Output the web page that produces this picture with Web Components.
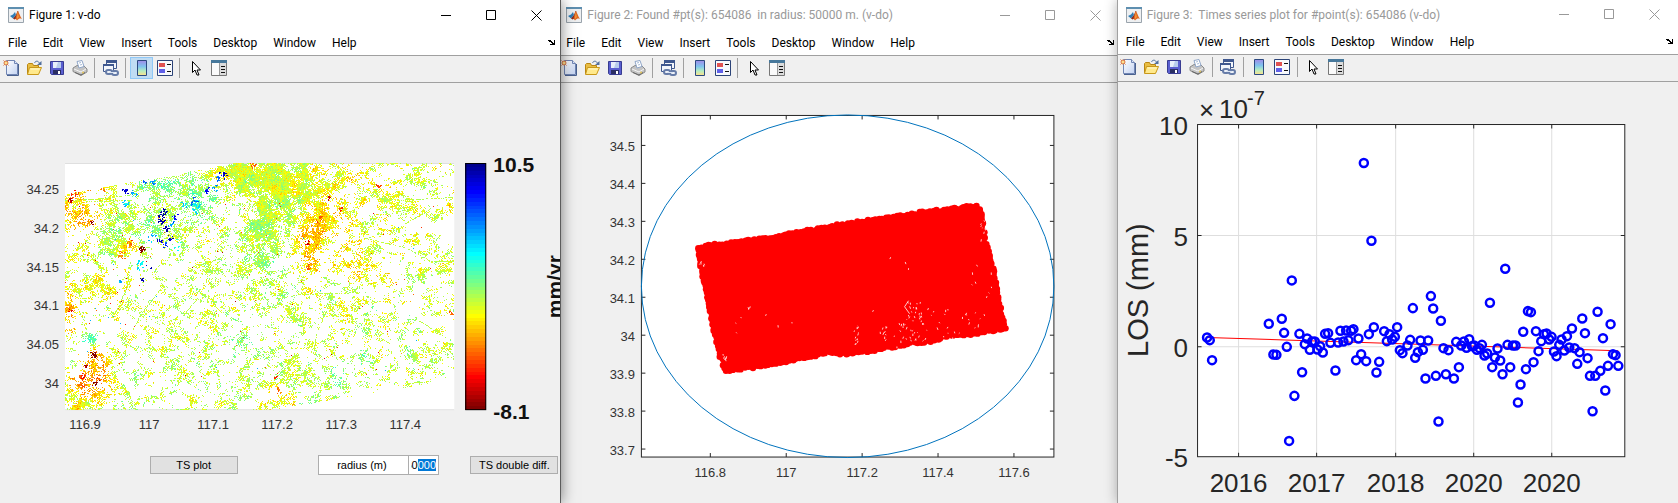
<!DOCTYPE html>
<html lang="en">
<head>
<meta charset="utf-8">
<title>Figures</title>
<style>
  body {
    margin: 0;
    display: flex;
    min-height: 100vh;
    overflow: hidden;
    background: #f0f0f0;
    font-family: "Liberation Sans", sans-serif;
  }
  figure-window { flex: 1 1 0; min-width: 0; }
  #velocity { z-index: 2; }
  #radius { margin: 0 -2px 0 -3px; }
  #series { z-index: 1; }
</style>
</head>
<body>
<figure-window id="velocity" active>
  <span slot="title">Figure 1: v-do</span>
  <velocity-map></velocity-map>
  <velocity-controls></velocity-controls>
</figure-window>
<figure-window id="radius">
  <span slot="title">Figure 2: Found #pt(s): 654086  in radius: 50000 m. (v-do)</span>
  <radius-plot></radius-plot>
</figure-window>
<figure-window id="series" raised>
  <span slot="title">Figure 3:  Times series plot for #point(s): 654086 (v-do)</span>
  <series-plot></series-plot>
</figure-window>

<template id="window-template">
  <style>
    :host {
      display: flex;
      flex-direction: column;
      box-sizing: border-box;
      position: relative;
      background: #f0f0f0;
      color: #000;
      --title-height: 30px;
    }
    :host([active]) { border-right: 1px solid #5c5c5c; box-shadow: 0 0 14px rgba(0, 0, 0, .5); }
    :host([raised]) { border-left: 1px solid #a0a0a0; box-shadow: 0 0 12px rgba(0, 0, 0, .3); --title-height: 29px; }
    header, nav { font: 12px/16px Roboto, "Open Sans", sans-serif; background: #fff; display: flex; align-items: center; }
    header { height: var(--title-height); padding-left: 8px; color: #999; }
    :host([active]) header { color: #000; }
    .title { flex: 1; margin-left: 5px; white-space: pre; overflow: hidden; }
    button { border: 0; background: none; padding: 0; margin: 0; font: inherit; color: inherit; }
    header button { width: 45px; height: 28px; }
    header svg, nav svg { display: block; margin: auto; }
    header button:last-child { margin-right: 1px; }
    nav { height: 25px; }
    nav button { padding: 0 8px; }
    nav button:last-child { margin-left: auto; padding: 0 4px; }
    .body { flex: 1; overflow: hidden; }
  </style>
  <header>
    <svg width="16" height="16" viewBox="0 0 16 16">
      <path d="M.5 .5h15v15H.5z" fill="#eef0f2" stroke="#9aa4ad"/>
      <path d="M0 0h16v2H0z" fill="#5e8fb0"/>
      <path d="M2 9l3-1.500 2-2.500 1 3-3 3.500z" fill="#2f7db5"/>
      <path d="M5 11.500l3-3.500 1.500-4 1 .5-2 7-2 1z" fill="#8a2a1c"/>
      <path d="M9.500 4c1.500 1 2.500 5 4.500 8-2-1-3-.5-5 1.500l-1.500-2z" fill="#e0661f"/>
      <path d="M9.800 5l.8 5-1.400 2z" fill="#f8b34c"/>
    </svg>
    <span class="title"><slot name="title"></slot></span>
    <button aria-label="Minimize"><svg width="11" height="11" fill="none" stroke="currentColor"><path d="M0 5.500h10"/></svg></button>
    <button aria-label="Maximize"><svg width="11" height="11" fill="none" stroke="currentColor"><path d="M.5 .5h9v9h-9z"/></svg></button>
    <button aria-label="Close"><svg width="11" height="11" fill="none" stroke="currentColor"><path d="M.5 .5l10 10M10.500 .5l-10 10"/></svg></button>
  </header>
  <nav>
    <button>File</button><button>Edit</button><button>View</button><button>Insert</button><button>Tools</button><button>Desktop</button><button>Window</button><button>Help</button>
    <button aria-label="Dock"><svg width="8" height="7"><path d="M0 1h3v1h1v1h1v1h1V1h1v5H2V5h2V4H3V3H1V2H0z"/></svg></button>
  </nav>
  <figure-toolbar></figure-toolbar>
  <div class="body"><slot></slot></div>
</template>

<template id="toolbar-template">
  <style>
    :host {
      display: flex;
      align-items: center;
      height: 24px;
      padding-bottom: 2px;
      border-top: 1px solid #a0a0a0;
      border-bottom: 1px solid #a0a0a0;
      background: #f0f0f0;
    }
    button { box-sizing: border-box; width: 23px; height: 22px; padding: 0; border: 1px solid transparent; background: none; }
    button:first-of-type { margin-left: -1px; }
    button.on { border-color: #90c8f6; background: #c0dcf3; }
    svg { display: block; margin: auto; }
    i { width: 1px; height: 20px; margin: 0 4px 0 3px; background: #a0a0a0; }
  </style>
  <button aria-label="New"><svg width="16" height="16">
    <defs><linearGradient id="p" x2="1" y2="1"><stop stop-color="#fff"/><stop offset="1" stop-color="#c3d3f2"/></linearGradient></defs>
    <path d="M4 15.500H15.500V4" fill="none" stroke="#49618f"/>
    <path d="M3.500 .5h8l3 3V14.500h-11z" fill="url(#p)" stroke="#7186b4"/>
    <path d="M11.500 .5v3h3" fill="#dce6fa" stroke="#7186b4"/>
    <path d="M.5 .5l5 5M5.500 .5l-5 5" stroke="#d87547"/><circle cx="3" cy="3" r="2" fill="#ffe08d" stroke="#d87547"/>
  </svg></button>
  <button aria-label="Open"><svg width="16" height="16">
    <path d="M1.500 14V4.500l1-1h4l1 2h5V14" fill="#e9bd43" stroke="#b98613"/>
    <path d="M1.500 14.500l2-7h12l-3 7z" fill="#ffe98c" stroke="#c99819"/>
    <path d="M4.500 9h9" stroke="#fff8cf"/>
    <path d="M8.500 3c1-2.500 4-2.500 5 .5" fill="none" stroke="#52709e"/><path d="M15.500 1v4H11z" fill="#52709e"/>
  </svg></button>
  <button aria-label="Save"><svg width="16" height="16">
    <path d="M1.500 1.500h13v13h-12l-1-1z" fill="#5a5fd0" stroke="#383c91"/>
    <path d="M4 2h8v6H4z" fill="#e7effb"/><path d="M9 2h3v6H7z" fill="#b8cdec"/>
    <path d="M4 10h8v4H4z" fill="#2a2e63"/><path d="M9 11h2v3H9z" fill="#fff"/>
  </svg></button>
  <button aria-label="Print"><svg width="16" height="16">
    <path d="M1 8l4-2.500 7 .5 3 3v3l-6 3.500-8-4z" fill="#c4c4c4" stroke="#8a8a8a"/>
    <path d="M5 1.500l5-1 2 6-5 1.500z" fill="#fff" stroke="#8fa6c8"/><path d="M7 3l2-.5M8 5l2-.5" stroke="#a8bcd8"/>
    <path d="M2 9l7 3 5-3" stroke="#f4f4f4" fill="none"/><path d="M3 12.500l6 2.500 4-2.500" stroke="#666" fill="none"/>
    <circle cx="11" cy="12.500" r="1" fill="#e6c65a"/>
  </svg></button>
  <i></i>
  <button aria-label="Link"><svg width="16" height="16">
    <path d="M3.500 .5h10v8h-10z" fill="#f3f6fb" stroke="#3f588f"/><path d="M3 0h11v3H3z" fill="#3f588f"/>
    <path d="M.5 4.500h10v7H.5z" fill="#f3f6fb" stroke="#3f588f"/><path d="M0 4h11v2H0z" fill="#3f588f"/>
    <g fill="none" stroke="#667ca8" stroke-width="2"><rect x="3" y="10" width="6" height="4" rx="2" fill="#eef2f8"/><rect x="9" y="11" width="6" height="4" rx="2" fill="#eef2f8"/></g>
    <path d="M6 12.500h6" stroke="#dbe5f5"/>
  </svg></button>
  <i></i>
  <button id="colorbar" aria-label="Colorbar"><svg width="12" height="16">
    <defs><linearGradient id="c" x2="0" y2="1"><stop stop-color="#a08be8"/><stop offset=".4" stop-color="#7fc4ee"/><stop offset=".7" stop-color="#b5edc0"/><stop offset="1" stop-color="#ffe08a"/></linearGradient></defs>
    <path d="M1.500 .5h9v15h-9z" fill="url(#c)" stroke="#2c4a80"/>
  </svg></button>
  <button aria-label="Legend"><svg width="16" height="16">
    <path d="M.5 .5h15v15H.5z" fill="#f7f9fd" stroke="#2c4478"/>
    <path d="M2 3h6v4H2z" fill="#e05252"/><path d="M2 9h6v4H2z" fill="#6060e8"/>
    <path d="M10 4.500h4M10 11.500h4" stroke="#111"/>
  </svg></button>
  <i></i>
  <button aria-label="Edit plot"><svg width="10" height="16">
    <path d="M1.500 1.500v11l2.500-2.500 2 5h2l-2-5h3.500z" fill="#fff" stroke="#000"/>
  </svg></button>
  <button aria-label="Property inspector"><svg width="16" height="16">
    <path d="M.5 .5h15v15H.5z" fill="#fafafa" stroke="#777"/><path d="M0 0h16v3H0z" fill="#47789b"/>
    <path d="M8 3h7v12H8z" fill="#dcdcdc"/><path d="M8.500 3v12" stroke="#999"/>
    <path d="M10 6.500h4M10 9.500h4M10 12.500h4" stroke="#111"/>
  </svg></button>
</template>

<template id="controls-template">
  <style>
    :host {
      display: grid;
      grid-template-columns: 150fr 88px 81fr 91px 30px 31fr 88px 2px;
      align-items: center;
      height: 20px;
      margin-top: 9px;
      font-size: 11px;
    }
    button, label, input { box-sizing: border-box; border: 1px solid #adadad; font: inherit; color: #000; padding: 0; text-align: center; }
    button { height: 18px; background: #e1e1e1; grid-column: 2; }
    button:last-child { grid-column: 7; }
    label { height: 20px; line-height: 18px; background: #fff; padding-right: 4px; grid-column: 4; }
    input { height: 20px; width: 31px; background: #fff; outline: none; padding: 0 2px; border-radius: 0; margin-left: -1px; text-align: left; }
    input::selection { background: #0078d7; color: #fff; }
  </style>
  <button>TS plot</button>
  <label for="r">radius (m)</label>
  <input id="r" value="50000">
  <button>TS double diff.</button>
</template>

<script>
const PLOT_STYLE = `<style>
  :host { display: block; }
  svg { display: block; width: 100%; height: auto; overflow: visible; }
  text { font-family: "Liberation Sans", sans-serif; font-size: 13px; fill: #333; }
  .end { text-anchor: end; }
  .mid { text-anchor: middle; }
</style>`;

// Small seeded generator, so the scatter is the same on every load
function seeded(seed) {
  return () => {
    seed = (seed * 1664525 + 1013904223) >>> 0;
    return seed / 4294967296;
  };
}

function valueNoise(rand) {
  const table = Array.from({ length: 4096 }, rand);
  const at = (x, y) => table[((x * 374761 ^ y * 668265) >>> 3) & 4095];
  return (x, y) => {
    const xi = Math.floor(x), yi = Math.floor(y);
    const u = x - xi, v = y - yi;
    const a = at(xi, yi) + (at(xi + 1, yi) - at(xi, yi)) * u;
    const b = at(xi, yi + 1) + (at(xi + 1, yi + 1) - at(xi, yi + 1)) * u;
    return a + (b - a) * v;
  };
}

// jet colormap, t = 0 dark blue, t = 1 dark red
function jet(t) {
  const c = k => Math.round(255 * Math.max(0, Math.min(1, 1.5 - Math.abs(4 * t - k))));
  return `rgb(${c(3)},${c(2)},${c(1)})`;
}

function texts(items, cls) {
  return items.map(([x, y, s]) => `<text class="${cls}" x="${x}" y="${y}">${s}</text>`).join("");
}

class FigureWindow extends HTMLElement {
  constructor() {
    super();
    this.attachShadow({ mode: "open" }).append(document.getElementById("window-template").content.cloneNode(true));
  }

  connectedCallback() {
    this.shadowRoot.querySelector("figure-toolbar").toggleAttribute("colorbar", this.hasAttribute("active"));
  }
}

class FigureToolbar extends HTMLElement {
  static observedAttributes = ["colorbar"];

  constructor() {
    super();
    this.attachShadow({ mode: "open" }).append(document.getElementById("toolbar-template").content.cloneNode(true));
  }

  attributeChangedCallback(name, oldValue, newValue) {
    this.shadowRoot.getElementById("colorbar").classList.toggle("on", newValue !== null);
  }
}

// x, y, radius x, radius y, added density, jet value, weight of that value
const PATCHES = [
  [200, 12, 50, 22, .34, .61, .8],
  [182, 12, 14, 12, .25, .52, .8],
  [200, 65, 22, 34, .34, .53, 1],
  [228, 35, 20, 25, .22, .57, .8],
  [190, 100, 18, 22, .18, .54, .7],
  [46, 76, 15, 17, .36, .54, .9],
  [85, 60, 30, 25, .10, .52, .8],
  [105, 20, 30, 8, .14, .48, 1],
  [132, 38, 17, 14, .14, .45, 1],
  [12, 48, 18, 20, .14, .68, 1.4],
  [22, 58, 8, 5, .10, .80, 1],
  [60, 82, 10, 8, .10, .71, 1.2],
  [262, 54, 18, 20, .20, .66, 1.2],
  [245, 84, 9, 24, .20, .70, 1.4],
  [285, 95, 20, 14, .12, .64, 1],
  [300, 30, 30, 18, .08, .63, .7],
  [320, 112, 14, 8, .15, .65, 1],
  [12, 238, 17, 11, .34, .62, 1],
  [28, 194, 10, 10, .16, .76, 2],
  [25, 220, 14, 11, .10, .78, 1.6],
  [25, 178, 9, 6, .10, .42, 1.2],
  [63, 178, 8, 8, .22, .60, 1],
  [32, 124, 20, 10, .14, .61, .6],
  [5, 150, 7, 20, .14, .70, 1],
  [55, 145, 6, 16, .18, .65, 1],
  [178, 175, 10, 16, .10, .50, 1],
  [228, 157, 10, 8, .20, .56, .7],
  [298, 166, 7, 7, .20, .50, .8],
  [297, 196, 8, 6, .34, .47, 1.3],
  [349, 192, 6, 8, .22, .53, .8],
  [273, 218, 9, 10, .22, .46, 1.3],
  [230, 204, 9, 8, .22, .60, .8],
  [213, 238, 12, 12, .12, .65, 1.4],
  [357, 108, 8, 8, .25, .56, .8],
  [350, 19, 7, 6, .20, .56, .8],
  [330, 40, 9, 9, .15, .54, .8]
];

// clumps of strong motion: x, y, radius, jet value, count
const SPOTS = [
  [76, 86, 3, .98, 24], [28, 191, 4, 1, 28], [30, 219, 4, .99, 13], [17, 213, 4, .87, 12],
  [26, 58, 4, .97, 8], [20, 203, 5, .96, 6], [10, 31, 4, .82, 20], [4, 36, 3, .92, 12],
  [38, 26, 3, .75, 12], [95, 57, 5, .04, 20], [98, 48, 4, .05, 18], [101, 67, 4, .03, 18],
  [94, 77, 3, .07, 12], [104, 76, 4, .08, 14], [99, 82, 3, .18, 9], [109, 54, 5, .12, 15],
  [106, 61, 4, .28, 12], [60, 27, 3, .1, 14], [68, 29, 4, .3, 15], [60, 40, 4, .34, 16],
  [78, 18, 2, .23, 7], [87, 18, 3, .26, 9], [74, 101, 4, .36, 22], [77, 116, 3, .05, 7],
  [84, 103, 3, .05, 4], [55, 117, 2, .3, 6], [128, 37, 5, .22, 20], [132, 44, 6, .35, 24],
  [118, 41, 4, .32, 12], [141, 27, 3, .14, 12], [149, 24, 4, .26, 12], [158, 11, 4, .06, 18],
  [154, 16, 4, .24, 10], [86, 73, 5, .32, 12], [112, 82, 5, .4, 8], [242, 80, 3, .9, 12],
  [243, 105, 3, .78, 14], [264, 34, 2, .9, 5], [276, 45, 3, .83, 9], [255, 56, 4, .8, 12],
  [313, 23, 3, .82, 6], [187, 1, 3, .8, 12], [15, 214, 2, .8, 8], [56, 92, 4, .75, 20],
  [64, 79, 4, .76, 16], [210, 214, 2, .85, 6], [213, 227, 3, .75, 10], [386, 150, 3, .78, 8], [5, 147, 2, .9, 5]
];

const ROADS = [
  [[0, 37], [30, 36], [62, 32], [80, 23], [95, 15], [118, 12]],
  [[20, 38], [66, 37]],
  [[68, 166], [75, 152], [95, 126]],
  [[51, 148], [67, 112]],
  [[118, 152], [133, 134]],
  [[267, 132], [251, 172], [248, 190]],
  [[208, 136], [235, 131], [300, 129]],
  [[300, 75], [340, 84], [365, 98], [389, 98]],
  [[330, 37], [389, 34]],
  [[350, 155], [380, 174]],
  [[343, 220], [366, 218]],
  [[233, 41], [270, 17], [280, 50]],
  [[340, 60], [367, 45]],
  [[295, 164], [325, 180]]
];

class VelocityMap extends HTMLElement {
  constructor() {
    super();
    this.attachShadow({ mode: "open" });
  }

  connectedCallback() {
    const yLabels = ["34.25", "34.2", "34.15", "34.1", "34.05", "34"].map((s, i) => [59, 194 + Math.round(i * 38.8), s]);
    const xLabels = ["116.9", "117", "117.1", "117.2", "117.3", "117.4"].map((s, i) => [85 + i * 64, 429, s]);
    let bar = "";
    for (let i = 0; i < 64; i++) {
      bar += `<rect x="465" y="${163 + i * 247 / 64}" width="21" height="${247 / 64}" fill="${jet((i + 1) / 64)}" shape-rendering="crispEdges"/>`;
    }
    this.shadowRoot.innerHTML = `${PLOT_STYLE}
      <style>.bold { font-size: 21px; font-weight: bold; fill: #111; }</style>
      <svg viewBox="0 83 560 363">
        <rect x="65" y="163" width="389" height="247" fill="#fff"/>
        <path d="M65 163.500h389M65 409.500h389" stroke="#dfdfdf"/>
        <g transform="translate(65 163)" fill="none" shape-rendering="crispEdges">${this.pixels(389, 247)}</g>
        ${bar}
        <rect x="465.500" y="163.500" width="20" height="246" fill="none" stroke="#000"/>
        ${texts(yLabels, "end")}${texts(xLabels, "mid")}
        <text class="bold" x="493" y="172">10.5</text>
        <text class="bold" x="493" y="419">-8.1</text>
        <text class="bold" transform="translate(562 318) rotate(-90)">mm/yr</text>
      </svg>`;
  }

  pixels(w, h) {
    const rand = seeded(11);
    const noise = valueNoise(rand);
    const cells = new Float32Array(w * h).fill(-1);
    const set = (x, y, t) => {
      x = Math.round(x);
      y = Math.round(y);
      if (x >= 0 && y >= 0 && x < w && y < h) cells[y * w + x] = Math.max(0, Math.min(1, t));
    };

    for (let y = 0; y < h; y++) {
      for (let x = 0; x < w; x++) {
        if (y < 31 - x * .185 || y > 247 - (x - 205) * .17) continue;
        let d = .29 - .05 * x / w - .05 * y / h;
        let t = .60 - .04 * y / h, weight = 1;
        for (const [px, py, rx, ry, add, value, pull] of PATCHES) {
          const q = ((x - px) / rx) ** 2 + ((y - py) / ry) ** 2;
          if (q > 5) continue;
          const g = Math.exp(-q);
          d += add * g;
          t += value * g * pull * 3;
          weight += g * pull * 3;
        }
        // empty fields around the river and in the west
        d -= .16 * Math.exp(-(((x - 82) / 20) ** 2) - ((y - 105) / 18) ** 2);
        d -= .14 * Math.exp(-(((x - 35) / 30) ** 2) - ((y - 158) / 16) ** 2);
        const n = noise(x / 7, y / 6) * .55 + noise(x / 2.6 + 40, y / 2.2 + 9) * .45;
        if (n + (rand() - .5) * .44 < .94 - d * 1.05) continue;
        const spread = (noise(x / 6 + 90, y / 6 + 31) - .5) * .13 + (rand() + rand() - 1) * .09;
        set(x, y, t / weight + spread);
      }
    }

    for (const line of ROADS) {
      for (let i = 1; i < line.length; i++) {
        const [x0, y0] = line[i - 1], [x1, y1] = line[i];
        const steps = Math.hypot(x1 - x0, y1 - y0);
        for (let k = 0; k < steps; k++) {
          if (rand() < .62) set(x0 + (x1 - x0) * k / steps, y0 + (y1 - y0) * k / steps, .53 + rand() * .06);
        }
      }
    }

    for (const [sx, sy, r, value, count] of SPOTS) {
      for (let i = 0; i < count * .7; i++) {
        const a = rand() * 6.283, q = r * rand();
        const x = sx + Math.cos(a) * q, y = sy + Math.sin(a) * q * 1.2;
        const t = value + (rand() - .5) * .08;
        set(x, y, t);
        if (rand() < .5) set(x + 1, y, t);
        if (rand() < .5) set(x, y + 1, t);
      }
    }

    for (let i = 0; i < 110; i++) {
      const x = rand() * w, y = 35 + rand() * 180;
      set(x, y, rand() < .2 ? .3 : .75 + rand() * .2);
    }

    const paths = Array.from({ length: 41 }, () => "");
    cells.forEach((t, i) => {
      if (t >= 0) paths[Math.round(t * 40)] += `M${i % w} ${Math.floor(i / w) + .5}h1`;
    });
    return paths.map((d, i) => d && `<path d="${d}" stroke="${jet(Math.max(.03, i / 40))}"/>`).join("");
  }
}

class VelocityControls extends HTMLElement {
  constructor() {
    super();
    this.attachShadow({ mode: "open" }).append(document.getElementById("controls-template").content.cloneNode(true));
  }

  connectedCallback() {
    const input = this.shadowRoot.querySelector("input");
    input.focus();
    input.setSelectionRange(2, 5);
    input.scrollLeft = input.scrollWidth;
  }
}

const OUTLINE = [
  [699, 248], [712, 245], [727, 244], [745, 241], [762, 239], [777, 238], [790, 234], [812, 230], [840, 225],
  [862, 222], [890, 218], [920, 213], [948, 210], [968, 207], [978, 207], [982, 214], [983, 226], [985, 241],
  [989, 252], [993, 268], [997, 286], [1000, 304], [1002, 318], [1006, 328], [1000, 330], [978, 333], [965, 336],
  [950, 335], [935, 341], [915, 343], [900, 346], [885, 348], [872, 351], [858, 352], [846, 354], [826, 353],
  [800, 359], [780, 363], [757, 367], [726, 371], [724, 366], [727, 360], [720, 357], [715, 335], [711, 315], [706, 290], [702, 270], [700, 260], [698, 251]
];

// gaps in the coverage: x, y, spread x, spread y, count
const GAPS = [
  [915, 310, 7, 8, 14], [912, 328, 12, 14, 22], [935, 320, 14, 14, 10], [857, 336, 3, 14, 12],
  [886, 334, 3, 8, 8], [972, 322, 14, 12, 10], [985, 285, 14, 14, 7], [950, 330, 26, 10, 12],
  [900, 335, 20, 12, 10], [750, 307, 5, 1, 3], [738, 325, 4, 8, 3], [702, 262, 3, 5, 5],
  [983, 230, 3, 10, 7], [725, 357, 4, 4, 6], [830, 325, 80, 18, 6], [940, 270, 50, 40, 5]
];

class RadiusPlot extends HTMLElement {
  constructor() {
    super();
    this.attachShadow({ mode: "open" });
  }

  connectedCallback() {
    const rand = seeded(5);
    const yTicks = [0, 1, 2, 3, 4, 5, 6, 7, 8].map(i => 145.5 + i * 38);
    const xTicks = [0, 1, 2, 3, 4].map(i => 710.5 + i * 76);
    const yNames = ["34.5", "34.4", "34.3", "34.2", "34.1", "34", "33.9", "33.8", "33.7"];
    const xNames = ["116.8", "117", "117.2", "117.4", "117.6"];
    const ticks = yTicks.map(y => `M641.5 ${y}h4M1054.5 ${y}h-4`).concat(xTicks.map(x => `M${x} 115.5v4M${x} 457.500v-4`)).join("");

    let edge = "";
    OUTLINE.forEach(([x0, y0], i) => {
      const [x1, y1] = OUTLINE[(i + 1) % OUTLINE.length];
      const n = Math.ceil(Math.hypot(x1 - x0, y1 - y0) / 4);
      for (let k = 0; k < n; k++) {
        edge += `<circle cx="${x0 + (x1 - x0) * k / n + rand() * 2 - 1}" cy="${y0 + (y1 - y0) * k / n + rand() * 2 - 1}" r="3.200"/>`;
      }
    });

    let gaps = "";
    for (const [x, y, sx, sy, count] of GAPS) {
      for (let i = 0; i < count; i++) {
        gaps += `M${x + (rand() * 2 - 1) * sx} ${y + (rand() * 2 - 1) * sy}l${rand() * 2 - 1} ${rand() * 2 + .5}`;
      }
    }

    this.shadowRoot.innerHTML = `${PLOT_STYLE}
      <svg viewBox="558 83 561 420">
        <rect x="641.500" y="115.500" width="413" height="342" fill="#fff" stroke="#262626"/>
        <path d="${ticks}" stroke="#262626"/>
        <g fill="#f00"><path d="M${OUTLINE.join("L")}z"/>${edge}</g>
        <path d="${gaps}M909 301l-4 6 5 7" fill="none" stroke="#fff" stroke-width=".8"/>
        <ellipse cx="848" cy="286.500" rx="206.500" ry="171.500" fill="none" stroke="#0072bd"/>
        ${texts(yNames.map((s, i) => [635, Math.round(yTicks[i] + 5), s]), "end")}
        ${texts(xNames.map((s, i) => [xTicks[i], 477, s]), "mid")}
      </svg>`;
  }
}

// acquisitions, three units to a pixel from the plot's own origin
const SERIES = [
  [291, 652], [299, 660], [306, 720], [476, 611], [490, 703], [499, 704], [515, 596], [522, 638], [530, 680],
  [537, 962], [545, 481], [553, 827], [568, 641], [576, 756], [584, 672], [591, 655], [599, 689], [606, 664],
  [614, 664], [622, 688], [630, 678], [638, 697], [645, 641], [654, 639], [661, 668], [676, 751], [684, 667],
  [691, 632], [700, 664], [708, 631], [715, 660], [723, 632], [730, 627], [738, 720], [745, 655], [753, 702],
  [761, 129], [768, 723], [776, 642], [784, 362], [791, 621], [799, 757], [807, 725], [822, 633], [830, 663],
  [838, 642], [846, 658], [854, 650], [861, 621], [869, 690], [877, 699], [892, 676], [900, 659], [908, 564],
  [915, 713], [923, 696], [931, 661], [938, 689], [946, 775], [954, 661], [962, 528], [969, 565], [977, 767],
  [985, 904], [992, 602], [1000, 684], [1007, 762], [1015, 690], [1031, 775], [1038, 665], [1046, 741],
  [1053, 676], [1061, 664], [1069, 683], [1077, 657], [1085, 678], [1092, 676], [1100, 689], [1108, 684],
  [1115, 674], [1123, 706], [1131, 700], [1139, 548], [1146, 741], [1154, 712], [1162, 685], [1170, 721],
  [1177, 762], [1185, 446], [1192, 674], [1200, 741], [1208, 676], [1216, 676], [1223, 847], [1231, 793],
  [1239, 635], [1247, 747], [1253, 573], [1262, 576], [1270, 726], [1277, 633], [1285, 693], [1293, 663],
  [1301, 642], [1309, 640], [1317, 658], [1324, 650], [1331, 694], [1339, 708], [1347, 674], [1354, 658],
  [1362, 691], [1370, 648], [1377, 682], [1385, 625], [1393, 684], [1401, 731], [1408, 696], [1416, 595],
  [1424, 639], [1432, 714], [1439, 767], [1447, 873], [1455, 767], [1462, 575], [1470, 752], [1478, 654],
  [1485, 811], [1493, 737], [1501, 612], [1508, 702], [1516, 705], [1524, 737]
];

class SeriesPlot extends HTMLElement {
  constructor() {
    super();
    this.attachShadow({ mode: "open" });
  }

  connectedCallback() {
    const xTicks = [1238.5, 1316.5, 1395.5, 1473.5, 1551.5];
    const yTicks = [235.5, 346.5];
    const years = ["2016", "2017", "2018", "2020", "2020"];
    const grid = xTicks.map(x => `M${x} 125v331`).concat(yTicks.map(y => `M1198 ${y}h426`)).join("");
    const ticks = xTicks.map(x => `M${x} 124.500v4M${x} 456.500v-4`).concat(yTicks.map(y => `M1197.500 ${y}h4M1624.500 ${y}h-4`)).join("");
    const marks = SERIES.map(([x, y]) => `<circle cx="${(1110 + x / 3).toFixed(1)}" cy="${(120 + y / 3).toFixed(1)}" r="4"/>`).join("");
    this.shadowRoot.innerHTML = `${PLOT_STYLE}
      <style>text { font-size: 26px; fill: #262626; } .power { font-size: 20px; } .name { font-size: 29px; }</style>
      <svg viewBox="1118 82 560 421">
        <rect x="1197.500" y="124.500" width="427" height="332" fill="#fff"/>
        <path d="${grid}" stroke="#dedede"/>
        <rect x="1197.500" y="124.500" width="427" height="332" fill="none" stroke="#262626"/>
        <path d="${ticks}" stroke="#262626"/>
        <path d="M1207 337.300L1618 350.700" stroke="#f00"/>
        <g fill="none" stroke="#00f" stroke-width="2.500">${marks}</g>
        <text x="1199" y="119">×</text><text x="1219" y="118">10</text><text class="power" x="1247" y="105">-7</text>
        ${texts([[1188, 135, "10"], [1188, 246, "5"], [1188, 357, "0"], [1188, 467, "-5"]], "end")}
        ${texts(years.map((s, i) => [xTicks[i], 492, s]), "mid")}
        <text class="name mid" transform="translate(1148 290) rotate(-90)">LOS (mm)</text>
      </svg>`;
  }
}

customElements.define("figure-toolbar", FigureToolbar);
customElements.define("figure-window", FigureWindow);
customElements.define("velocity-map", VelocityMap);
customElements.define("velocity-controls", VelocityControls);
customElements.define("radius-plot", RadiusPlot);
customElements.define("series-plot", SeriesPlot);
</script>
</body>
</html>
